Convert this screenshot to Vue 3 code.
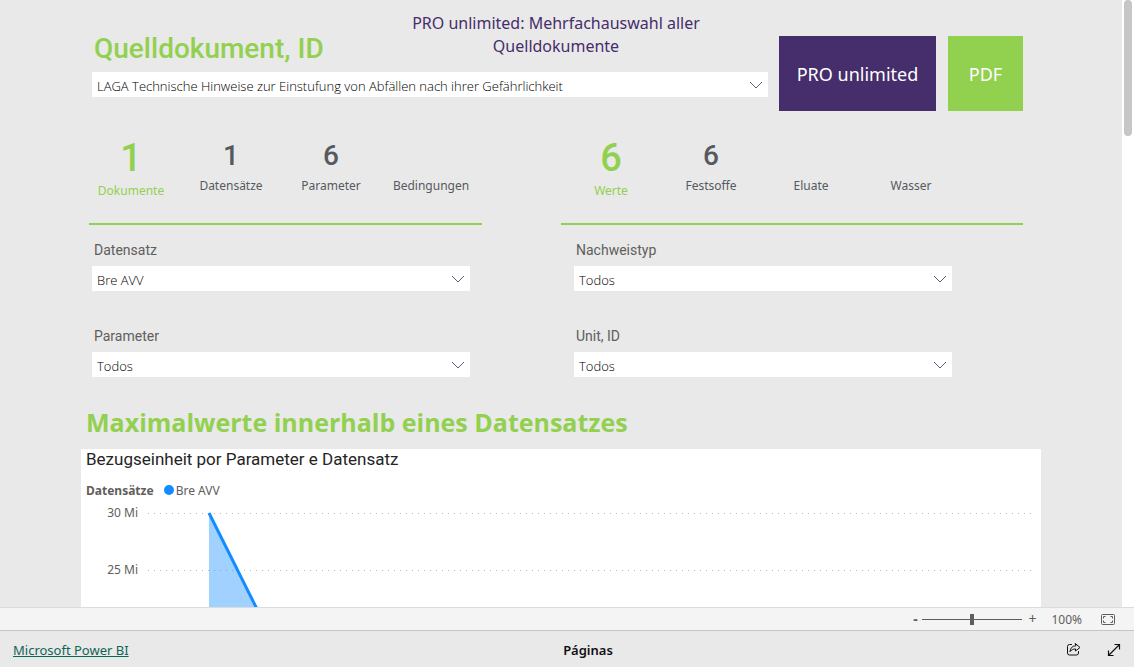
<script setup>
import { ref } from 'vue'

const source = ref('LAGA Technische Hinweise zur Einstufung von Abfällen nach ihrer Gefährlichkeit')
const zoom = ref(50)

const statGroups = [
  [
    { value: '1', label: 'Dokumente', main: true },
    { value: '1', label: 'Datensätze' },
    { value: '6', label: 'Parameter' },
    { value: '', label: 'Bedingungen' },
  ],
  [
    { value: '6', label: 'Werte', main: true },
    { value: '6', label: 'Festsoffe' },
    { value: '', label: 'Eluate' },
    { value: '', label: 'Wasser' },
  ],
]

const filters = ref([
  { id: 'datensatz', label: 'Datensatz', value: 'Bre AVV' },
  { id: 'nachweistyp', label: 'Nachweistyp', value: 'Todos' },
  { id: 'parameter', label: 'Parameter', value: 'Todos' },
  { id: 'unit', label: 'Unit, ID', value: 'Todos' },
])

const ticks = [
  { y: 12, label: '30 Mi' },
  { y: 69, label: '25 Mi' },
]
</script>

<template>
  <div class="app">
    <main class="viewport">
      <div class="scroll-area">
        <div class="report">
          <header class="top">
            <div class="source">
              <div class="source-head">
                <h1><label for="source">Quelldokument, ID</label></h1>
                <p class="note">PRO unlimited: Mehrfachauswahl aller Quelldokumente</p>
              </div>
              <div class="dropdown">
                <select id="source" v-model="source">
                  <option>{{ source }}</option>
                </select>
                <svg class="chevron" viewBox="0 0 14 8" aria-hidden="true"><path d="M1 1l6 6 6-6" /></svg>
              </div>
            </div>
            <button type="button" class="tile pro">PRO unlimited</button>
            <button type="button" class="tile pdf">PDF</button>
          </header>

          <section class="stats">
            <div v-for="(group, g) in statGroups" :key="g" class="stat-group">
              <div class="stat-row">
                <div v-for="s in group" :key="s.label" class="stat" :class="{ main: s.main }">
                  <span class="value">{{ s.value }}</span>
                  <span class="caption">{{ s.label }}</span>
                </div>
              </div>
              <hr class="rule" />
            </div>
          </section>

          <section class="filters">
            <div v-for="f in filters" :key="f.id" class="filter">
              <label :for="f.id">{{ f.label }}</label>
              <div class="dropdown">
                <select :id="f.id" v-model="f.value">
                  <option>{{ f.value }}</option>
                </select>
                <svg class="chevron" viewBox="0 0 14 8" aria-hidden="true"><path d="M1 1l6 6 6-6" /></svg>
              </div>
            </div>
          </section>

          <h2>Maximalwerte innerhalb eines Datensatzes</h2>

          <section class="card">
            <h3>Bezugseinheit por Parameter e Datensatz</h3>
            <div class="legend">
              <strong>Datensätze</strong>
              <span class="dot"></span>
              <span class="series">Bre AVV</span>
            </div>
            <svg class="chart" aria-label="Bezugseinheit">
              <g v-for="t in ticks" :key="t.label">
                <line class="grid" x1="67" :y1="t.y + 0.5" x2="952" :y2="t.y + 0.5" />
                <text x="57" :y="t.y + 4" text-anchor="end">{{ t.label }}</text>
              </g>
              <path class="area" d="M128 12L201 158H128Z" />
              <path class="line" d="M128 12L201 158" />
            </svg>
          </section>
        </div>
      </div>
      <div class="scrollbar"><div class="thumb"></div></div>
    </main>

    <div class="zoombar">
      <button type="button" class="step minus" aria-label="Reduzir">-</button>
      <input v-model="zoom" type="range" min="0" max="100" aria-label="Zoom" />
      <button type="button" class="step plus" aria-label="Ampliar">+</button>
      <span class="percent">100%</span>
      <button type="button" class="icon" aria-label="Ajustar">
        <svg width="14" height="11" viewBox="0 0 14 11" fill="none" stroke="#605e5c">
          <rect x="0.5" y="0.5" width="13" height="10" rx="1" />
          <path d="M2.5 4.500v-2h2M9.500 2.500h2v2M11.500 6.500v2h-2M4.500 8.500h-2v-2" />
        </svg>
      </button>
    </div>

    <footer class="footer">
      <a href="#">Microsoft Power BI</a>
      <span class="pages">Páginas</span>
      <div class="actions">
        <button type="button" class="icon" aria-label="Compartilhar">
          <svg width="14" height="13" viewBox="0 0 14 13" fill="none" stroke="#111" stroke-linejoin="round" stroke-linecap="round">
            <path d="M4.500 1.500h-2a2 2 0 0 0-2 2v6.500a2 2 0 0 0 2 2h7a2 2 0 0 0 2-2v-1.500" />
            <path d="M8.500 0.700L13 4.500 8.500 8V6C6 6 4.500 6.700 3 8.700 3.300 5 5.200 3 8.500 2.800Z" />
          </svg>
        </button>
        <button type="button" class="icon" aria-label="Tela inteira">
          <svg width="14" height="14" viewBox="0 0 14 14" fill="none" stroke="#111" stroke-width="1.200">
            <path d="M1.500 12.500l11-11M7.500 1.500h5v5M1.500 7.500v5h5" />
          </svg>
        </button>
      </div>
    </footer>
  </div>
</template>

<style>
body {
  margin: 0;
}
</style>

<style scoped>
.app {
  display: flex;
  flex-direction: column;
  height: 100vh;
  font-family: "Noto Sans", "Open Sans", sans-serif;
  font-size: 12px;
  color: #252423;
  background: #e9e9e9;
}
.app * {
  box-sizing: border-box;
}
button,
select {
  font: inherit;
  border: 0;
  border-radius: 0;
  padding: 0;
  margin: 0;
}
.viewport {
  flex: 1;
  min-height: 0;
  display: flex;
}
.scroll-area {
  flex: 1;
  min-width: 0;
  overflow: hidden;
  display: flex;
  justify-content: center;
}
.scrollbar {
  flex: 0 0 12px;
  background: #fff;
  padding: 0 2px;
}
.thumb {
  height: 136px;
  border-radius: 4px;
  background: #c6c6c6;
}
.report {
  flex: 1;
  max-width: 960px;
  display: flex;
  flex-direction: column;
}

.top {
  display: flex;
  align-items: flex-start;
  padding: 0 18px 0 11px;
}
.source {
  flex: 1;
  margin-right: 11px;
}
.source-head {
  display: flex;
  height: 72px;
}
h1 {
  flex: 1;
  margin: 0;
  padding: 31px 0 0 2px;
  font: 500 28px/36px Roboto, sans-serif;
  color: #92d050;
  white-space: nowrap;
}
.note {
  flex: 0 0 310px;
  margin: 12px 57px 0 0;
  font-size: 16px;
  line-height: 23px;
  text-align: center;
  color: #462d6b;
}
.dropdown {
  position: relative;
}
.dropdown select {
  display: block;
  width: 100%;
  height: 25px;
  padding: 3px 30px 0 5px;
  appearance: none;
  background: #fff;
  color: #000;
  font-family: "Open Sans", sans-serif;
  font-weight: 300;
  font-size: 13px;
}
.chevron {
  position: absolute;
  right: 5px;
  top: 9px;
  width: 14px;
  height: 8px;
  fill: none;
  stroke: #5c5f78;
  pointer-events: none;
}
.tile {
  margin-top: 36px;
  height: 75px;
  color: #fff;
  font-size: 18px;
}
.pro {
  width: 157px;
  background: #462d6b;
}
.pdf {
  width: 75px;
  margin-left: 12px;
  background: #92d050;
}

.stats {
  display: grid;
  grid-template-columns: 401fr 462fr;
  column-gap: 79px;
  margin: 12px 18px 0 0;
}
.stat-row {
  display: flex;
  height: 86px;
}
.stat {
  flex: 0 0 100px;
  display: flex;
  flex-direction: column;
  align-items: center;
  padding-top: 15px;
  color: #555960;
}
.value {
  height: 35px;
  font: 500 28px/35px Roboto, sans-serif;
}
.caption {
  margin-top: 4px;
  line-height: 18px;
  font-size: 12px;
}
.main {
  color: #92d050;
}
.main .value {
  height: 40px;
  font-size: 38px;
  line-height: 41px;
}
.rule {
  height: 2px;
  margin: 14px 0 0;
  border: 0;
  background: #92d050;
}
.stat-group:first-child .rule {
  margin-left: 8px;
}

.filters {
  display: grid;
  grid-template-columns: 378fr 378fr;
  column-gap: 104px;
  row-gap: 35px;
  margin: 15px 89px 0 11px;
}
.filter label {
  display: block;
  height: 26px;
  padding-left: 2px;
  font: 14px/20px Roboto, sans-serif;
  color: #605e5c;
}

h2 {
  margin: 27px 0 0 5px;
  font-family: "Open Sans", sans-serif;
  font-size: 25px;
  line-height: 36px;
  font-weight: 700;
  color: #92d050;
}
.card {
  margin-top: 9px;
  background: #fff;
}
h3 {
  margin: 0;
  padding-left: 5px;
  font: 400 17px/21px Roboto, sans-serif;
}
.legend {
  display: flex;
  align-items: center;
  height: 20px;
  margin: 10px 0 1px;
  padding-left: 5px;
  color: #605e5c;
}
.dot {
  width: 10px;
  height: 10px;
  margin: 0 2px 0 10px;
  border-radius: 50%;
  background: #118dff;
}
.chart {
  display: block;
  width: 100%;
  height: 160px;
}
.chart text {
  font-size: 12px;
  fill: #605e5c;
}
.grid {
  stroke: #b8b8b8;
  stroke-dasharray: 1 5;
}
.area {
  fill: #118dff;
  fill-opacity: 0.4;
}
.line {
  fill: none;
  stroke: #118dff;
  stroke-width: 3;
}

.zoombar {
  display: flex;
  align-items: center;
  justify-content: flex-end;
  height: 23px;
  padding-right: 19px;
  border-top: 1px solid #dcdcdc;
  background: #f4f4f4;
  color: #605e5c;
}
.step {
  width: 14px;
  background: none;
  color: #605e5c;
  font-size: 14px;
  line-height: 20px;
}
.minus {
  font-weight: 700;
}
.plus {
  width: 20px;
}
.zoombar input {
  appearance: none;
  width: 100px;
  height: 12px;
  margin: 0;
  background: linear-gradient(#605e5c, #605e5c) center / 100% 1px no-repeat;
}
.zoombar input::-webkit-slider-thumb {
  appearance: none;
  width: 4px;
  height: 11px;
  background: #605e5c;
}
.percent {
  margin: 0 19px 0 9px;
}
.icon {
  display: flex;
  background: none;
}

.footer {
  display: grid;
  grid-template-columns: 1fr auto 1fr;
  align-items: center;
  height: 37px;
  padding: 1px 13px 0;
  border-top: 1px solid #c6c6c6;
  background: #e9e9e9;
  font-size: 13px;
}
.footer a {
  justify-self: start;
  color: #0e6657;
}
.pages {
  margin-left: 42px;
  font-weight: 600;
  color: #111;
}
.actions {
  display: flex;
  align-items: center;
  justify-content: flex-end;
  gap: 26px;
}
</style>
